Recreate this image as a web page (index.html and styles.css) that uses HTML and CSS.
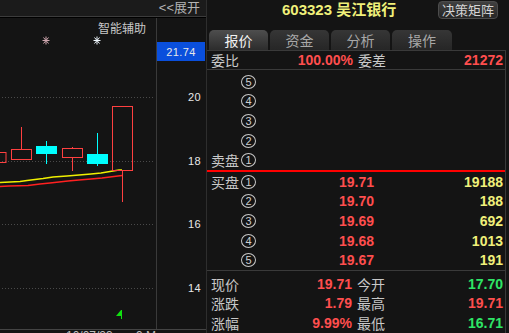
FILE: index.html
```html
<!DOCTYPE html>
<html lang="zh">
<head>
<meta charset="utf-8">
<link rel="stylesheet" href="styles.css">
</head>
<body>
<div class="app">
  <div class="left">
    <div class="topbar"><span class="expand">&lt;&lt;展开</span></div>
    <div class="chart">
      <svg class="plot" width="206" height="312" viewBox="0 17 206 312" xmlns="http://www.w3.org/2000/svg">
        <rect x="0" y="17" width="206" height="1" fill="#000000"/>
        <line x1="156.5" y1="18" x2="156.5" y2="329" stroke="#3a3a3a" stroke-width="1"/>
        <g stroke="#4a4a4a" stroke-width="1" stroke-dasharray="1 2">
          <line x1="2" y1="97.5" x2="155" y2="97.5"/>
          <line x1="2" y1="161.5" x2="155" y2="161.5"/>
          <line x1="2" y1="224.5" x2="155" y2="224.5"/>
          <line x1="2" y1="288.5" x2="155" y2="288.5"/>
        </g>
        <text class="assist" x="98" y="33">智能辅助</text>
        <g stroke-width="1">
          <g stroke="#d0a8b0"><line x1="42.5" y1="40.5" x2="49.5" y2="40.5"/><line x1="46" y1="36.5" x2="46" y2="44.5"/><line x1="43.5" y1="37.5" x2="48.5" y2="43.5"/><line x1="48.5" y1="37.5" x2="43.5" y2="43.5"/></g>
          <g stroke="#f0f8ff"><line x1="93.5" y1="40.5" x2="100.5" y2="40.5"/><line x1="97" y1="36.5" x2="97" y2="44.5"/><line x1="94.5" y1="37.5" x2="99.5" y2="43.5"/><line x1="99.5" y1="37.5" x2="94.5" y2="43.5"/></g>
        </g>
        <rect x="157" y="42" width="48" height="19" fill="#0a4fdc"/>
        <text class="axis" x="181" y="55.5" text-anchor="middle" fill="#ffffff">21.74</text>
        <text class="axis" x="201" y="101" text-anchor="end">20</text>
        <text class="axis" x="201" y="165" text-anchor="end">18</text>
        <text class="axis" x="201" y="228" text-anchor="end">16</text>
        <text class="axis" x="201" y="292" text-anchor="end">14</text>
        <polyline fill="none" stroke="#ff2020" stroke-width="1.5" points="0,186.5 9,186 28,185.5 40,184 50,183 59,182 68,181 79,180 91,179 102,178 110,177 118,176 122,175.5"/>
        <polyline fill="none" stroke="#f0f000" stroke-width="1.5" points="0,182.5 20,181.5 27,180.5 35,179.5 43,178.5 53,177 67,176 79,175 91,174 101,173 107,172 113,171 119,170 122,170"/>
        <g fill="none" stroke="#ff4040" stroke-width="1">
          <rect x="-10" y="152.5" width="16" height="10"/>
          <line x1="21.5" y1="127" x2="21.5" y2="149"/>
          <rect x="11.5" y="149.5" width="20" height="10"/>
          <line x1="72.5" y1="147" x2="72.5" y2="148"/>
          <line x1="72.5" y1="158" x2="72.5" y2="171"/>
          <rect x="62.5" y="148.5" width="20" height="9"/>
          <rect x="112.5" y="106.5" width="20" height="64"/>
          <line x1="122.5" y1="171" x2="122.5" y2="202"/>
        </g>
        <g stroke="#00ffff" stroke-width="1">
          <line x1="46.5" y1="141" x2="46.5" y2="164"/>
          <line x1="97.5" y1="133" x2="97.5" y2="166"/>
        </g>
        <g fill="#00ffff">
          <rect x="36" y="146" width="21" height="8"/>
          <rect x="87" y="154" width="21" height="10"/>
        </g>
        <g fill="#10e010" stroke="#10e010">
          <line x1="121.5" y1="310" x2="121.5" y2="319" stroke-width="1"/>
          <polygon points="121,310 116,316 121,316" stroke="none"/>
        </g>
      </svg>
    </div>
    <div class="timeaxis"><span class="tick">10/07/23</span><span class="tick small">⌂</span><span class="tick">9 M</span></div>
  </div>
  <div class="right">
    <div class="head">
      <div class="title">603323 吴江银行</div>
      <button class="btn">决策矩阵</button>
    </div>
    <div class="tabs">
      <div class="tab active">报价</div>
      <div class="tab">资金</div>
      <div class="tab">分析</div>
      <div class="tab wide">操作</div>
    </div>
    <div class="book">
      <div class="summary">
        <span class="lab">委比</span>
        <span class="num red">100.00%</span>
        <span class="lab lab2">委差</span>
        <span class="num red">21272</span>
      </div>
      <div class="asks">
        <div class="level"><span class="lvl"><span class="circ">5</span></span><span></span><span></span></div>
        <div class="level"><span class="lvl"><span class="circ">4</span></span><span></span><span></span></div>
        <div class="level"><span class="lvl"><span class="circ">3</span></span><span></span><span></span></div>
        <div class="level"><span class="lvl"><span class="circ">2</span></span><span></span><span></span></div>
        <div class="level"><span class="lvl"><span class="side">卖盘</span><span class="circ">1</span></span><span></span><span></span></div>
      </div>
      <div class="bids">
        <div class="level"><span class="lvl"><span class="side">买盘</span><span class="circ">1</span></span><span class="num red">19.71</span><span class="num yellow">19188</span></div>
        <div class="level"><span class="lvl"><span class="circ">2</span></span><span class="num red">19.70</span><span class="num yellow">188</span></div>
        <div class="level"><span class="lvl"><span class="circ">3</span></span><span class="num red">19.69</span><span class="num yellow">692</span></div>
        <div class="level"><span class="lvl"><span class="circ">4</span></span><span class="num red">19.68</span><span class="num yellow">1013</span></div>
        <div class="level"><span class="lvl"><span class="circ">5</span></span><span class="num red">19.67</span><span class="num yellow">191</span></div>
      </div>
      <div class="quotes">
        <div class="quote"><span class="lab">现价</span><span class="num red">19.71</span><span class="lab lab2">今开</span><span class="num green">17.70</span></div>
        <div class="quote"><span class="lab">涨跌</span><span class="num red">1.79</span><span class="lab lab2">最高</span><span class="num red">19.71</span></div>
        <div class="quote"><span class="lab">涨幅</span><span class="num red">9.99%</span><span class="lab lab2">最低</span><span class="num green">16.71</span></div>
      </div>
    </div>
  </div>
</div>
</body>
</html>
```
FILE: styles.css
```css
* { box-sizing: border-box; margin: 0; padding: 0; }
html, body { width: 509px; height: 333px; overflow: hidden; }
body {
  background: #141414;
  font-family: "Noto Sans CJK SC", sans-serif;
  color: #c8c8c8;
}
.app { display: flex; height: 333px; }

/* left chart panel */
.left { width: 206px; flex: none; display: flex; flex-direction: column; }
.topbar {
  height: 16px;
  background: #1b1b1b;
  display: flex;
  justify-content: flex-end;
  align-items: center;
  padding-right: 6px;
}
.expand {
  font-family: "Liberation Sans", "Noto Sans CJK SC", sans-serif;
  font-size: 13px;
  line-height: 16px;
  color: #b4b4b4;
}
.chart { height: 313px; border-top: 1px solid #3c3c3c; }
.plot { display: block; }
.assist { font-family: "Noto Sans CJK SC", sans-serif; font-size: 12px; fill: #c8c8c8; }
.axis { font-family: "Liberation Sans", Arial, sans-serif; font-size: 11px; fill: #e8e8e8; letter-spacing: 0.4px; }
.timeaxis {
  height: 4px;
  border-top: 1px solid #444;
  overflow: hidden;
  display: flex;
  gap: 8px;
  padding-left: 66px;
  font-family: "Liberation Sans", Arial, sans-serif;
  font-size: 12px;
  line-height: 12px;
  color: #bdbdbd;
}
.tick.small { color: #888; }

/* right quote panel */
.right {
  width: 303px;
  flex: none;
  border-left: 1px solid #2e2e2e;
  display: flex;
  flex-direction: column;
}
.head {
  height: 30px;
  display: flex;
  align-items: flex-start;
}
.title {
  margin-left: 75px;
  font-family: "Liberation Sans", "Noto Sans CJK SC", sans-serif;
  font-weight: bold;
  font-size: 15px;
  line-height: 20px;
  white-space: nowrap;
  color: #f0f07a;
}
.btn {
  margin-left: auto;
  margin-right: 11px;
  margin-top: 1px;
  width: 60px;
  height: 18px;
  flex: none;
  border: 1px solid #4c4c4c;
  border-radius: 4px;
  background: linear-gradient(#404040, #262626);
  color: #d4d4d4;
  font-family: "Noto Sans CJK SC", sans-serif;
  font-size: 13px;
  line-height: 16px;
}
.tabs {
  height: 20px;
  display: flex;
  gap: 2px;
  padding-left: 2px;
}
.tab {
  width: 59px;
  height: 20px;
  border-radius: 5px 5px 0 0;
  background: linear-gradient(#363636, #262626);
  color: #a8a8a8;
  font-size: 14px;
  line-height: 20px;
  text-align: center;
}
.tab.wide { width: 60px; }
.tab.active { background: linear-gradient(#4e4e4e, #2c2c2c); color: #f2f2f2; }

.book {
  flex: 1;
  margin-right: 3px;
  border-top: 1px solid #3a3a3a;
  border-right: 1px solid #3a3a3a;
}
.summary, .quote {
  display: grid;
  grid-template-columns: 40px 102px 45px 1fr;
  padding: 0 2px 0 4px;
  align-items: center;
}
.summary { height: 19px; border-bottom: 1px solid #3a3a3a; }
.quote { height: 19.6px; grid-template-columns: 40px 101px 46px 1fr; }
.lab { font-size: 14px; line-height: 18px; color: #c8c8c8; }
.lab2 { padding-left: 5px; }
.num {
  font-family: "Liberation Sans", Arial, sans-serif;
  font-weight: bold;
  font-size: 14px;
  text-align: right;
}
.red { color: #ff4e4e; }
.yellow { color: #f0f07a; }
.green { color: #2ee566; }

.asks { padding-top: 2px; height: 102px; border-bottom: 2px solid #ff0000; }
.bids { height: 99px; border-bottom: 1px solid #3a3a3a; }
.quotes { padding-top: 3px; }
.level {
  height: 19.6px;
  display: grid;
  grid-template-columns: 45px 118px 1fr;
  padding: 0 2px 0 4px;
  align-items: center;
}
.lvl {
  display: flex;
  justify-content: flex-end;
  align-items: center;
  font-size: 14px;
  line-height: 18px;
  color: #c8c8c8;
}
.side { margin-right: auto; }
.circ {
  width: 15px;
  height: 14px;
  border: 1px solid #c8c8c8;
  border-radius: 50%;
  font-family: "Liberation Sans", Arial, sans-serif;
  font-size: 11px;
  line-height: 12px;
  text-align: center;
  color: #d0d0d0;
}
```
